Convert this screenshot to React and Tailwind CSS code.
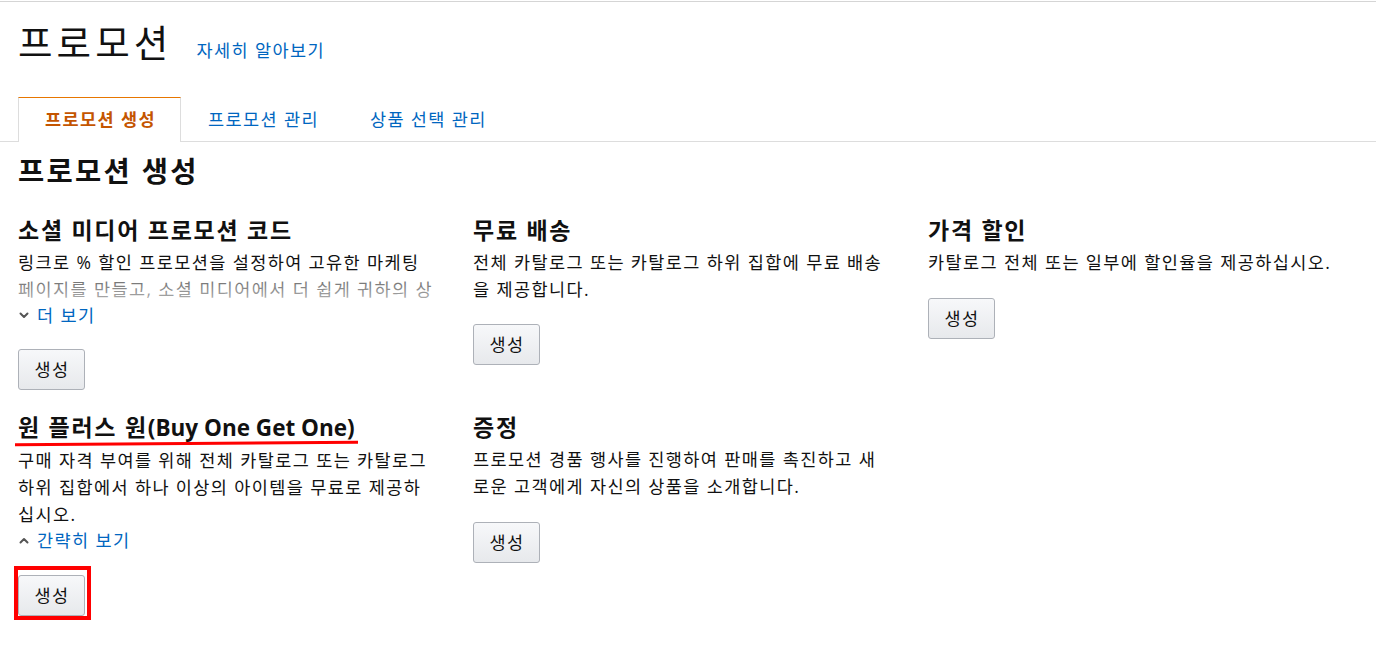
import React from "react";

const FONT = { fontFamily: '"Open Sans", "Noto Sans CJK KR", sans-serif' };

function Chevron({ up }) {
  return (
    <svg width="10" height="7" viewBox="0 0 10 7" className="shrink-0" aria-hidden="true">
      <path
        d={up ? "M1.5 5.5 L5 2 L8.5 5.5" : "M1.5 1.5 L5 5 L8.5 1.5"}
        fill="none"
        stroke="#555"
        strokeWidth="2"
        strokeLinecap="round"
        strokeLinejoin="round"
      />
    </svg>
  );
}

function CreateButton() {
  return (
    <button className="h-[41px] w-[67px] rounded-[3px] border border-[#adb1b8] bg-linear-to-b from-[#f7f8fa] to-[#e7e9ec] pl-[1px] text-[17.5px] leading-none tracking-[0.08em] text-[#111]">
      생성
    </button>
  );
}

function Heading({ children }) {
  return <h3 className="text-[23px] font-bold leading-[32px] tracking-[0.075em] text-[#111]">{children}</h3>;
}

function Desc({ children }) {
  return <p className="mt-[3px] text-[17.5px] leading-[27px] tracking-[0.08em] text-[#111]">{children}</p>;
}

function MoreLink({ up, children }) {
  return (
    <div className="flex items-center gap-[8px] pl-px text-[17.5px] leading-[24px] tracking-[0.08em] text-[#0066c0]">
      <Chevron up={up} />
      <span>{children}</span>
    </div>
  );
}

export default function App() {
  return (
    <div className="min-h-[649px] w-full bg-white text-[#111]" style={FONT}>
      <div className="h-px" />
      <div className="border-t border-[#d5d5d5]" />

      <div className="flex items-baseline pl-[18px] pt-[17px]">
        <h1 className="text-[37.5px] font-normal leading-[48px] tracking-[0.11em] text-[#111]">프로모션</h1>
        <a className="ml-[24px] text-[17.5px] tracking-[0.08em] text-[#0066c0]">자세히 알아보기</a>
      </div>

      <div className="mt-[30px] flex border-b border-[#dddddd] pl-[18px]">
        <div className="-mb-px flex h-[45px] items-center border-x border-t border-x-[#dddddd] border-t-[#e77600] bg-white pb-px pl-[26px] pr-[24px] text-[17.5px] font-bold tracking-[0.08em] text-[#c45500]">
          프로모션 생성
        </div>
        <div className="flex h-[44px] items-center pl-[27px] pr-[25px] text-[17.5px] tracking-[0.08em] text-[#0066c0]">
          프로모션 관리
        </div>
        <div className="flex h-[44px] items-center pl-[26px] pr-[25px] text-[17.5px] tracking-[0.08em] text-[#0066c0]">
          상품 선택 관리
        </div>
      </div>

      <h2 className="mt-[11px] pl-[18px] text-[28.5px] font-bold leading-[36px] tracking-[0.08em] text-[#111]">
        프로모션 생성
      </h2>

      <div className="mt-[25px] grid grid-cols-[455px_455px_455px] gap-y-[21px] pl-[18px]">
        {/* Social media promo code */}
        <div>
          <Heading>소셜 미디어 프로모션 코드</Heading>
          <div className="relative mt-[3px]">
            <p className="text-[17.5px] leading-[27px] tracking-[0.08em] text-[#111]">
              링크로 % 할인 프로모션을 설정하여 고유한 마케팅
              <br />
              페이지를 만들고, 소셜 미디어에서 더 쉽게 귀하의 상
            </p>
            <div className="absolute inset-x-0 bottom-0 h-[27px] bg-linear-to-b from-white/35 to-white/70" />
          </div>
          <MoreLink>더 보기</MoreLink>
          <div className="mt-[22px]">
            <CreateButton />
          </div>
        </div>

        {/* Free shipping */}
        <div>
          <Heading>무료 배송</Heading>
          <Desc>
            전체 카탈로그 또는 카탈로그 하위 집합에 무료 배송
            <br />을 제공합니다.
          </Desc>
          <div className="mt-[21px]">
            <CreateButton />
          </div>
        </div>

        {/* Price discount */}
        <div>
          <Heading>가격 할인</Heading>
          <Desc>카탈로그 전체 또는 일부에 할인율을 제공하십시오.</Desc>
          <div className="mt-[22px]">
            <CreateButton />
          </div>
        </div>

        {/* BOGO */}
        <div>
          <div className="relative">
            <Heading>
              원 플러스 원<span className="text-[22.5px] tracking-normal">(Buy One Get One)</span>
            </Heading>
            <div className="absolute left-[-3px] top-[31px] h-[3px] w-[343px] -rotate-[0.4deg] bg-[#ff0000]" />
          </div>
          <Desc>
            구매 자격 부여를 위해 전체 카탈로그 또는 카탈로그
            <br />
            하위 집합에서 하나 이상의 아이템을 무료로 제공하
            <br />
            십시오.
          </Desc>
          <MoreLink up>간략히 보기</MoreLink>
          <div className="relative mt-[23px] w-[67px]">
            <CreateButton />
            <div className="pointer-events-none absolute left-[-4px] top-[-9px] h-[54px] w-[77px] border-4 border-[#ff0000]" />
          </div>
        </div>

        {/* Gift */}
        <div>
          <Heading>증정</Heading>
          <Desc>
            프로모션 경품 행사를 진행하여 판매를 촉진하고 새
            <br />
            로운 고객에게 자신의 상품을 소개합니다.
          </Desc>
          <div className="mt-[22px]">
            <CreateButton />
          </div>
        </div>
      </div>
    </div>
  );
}
